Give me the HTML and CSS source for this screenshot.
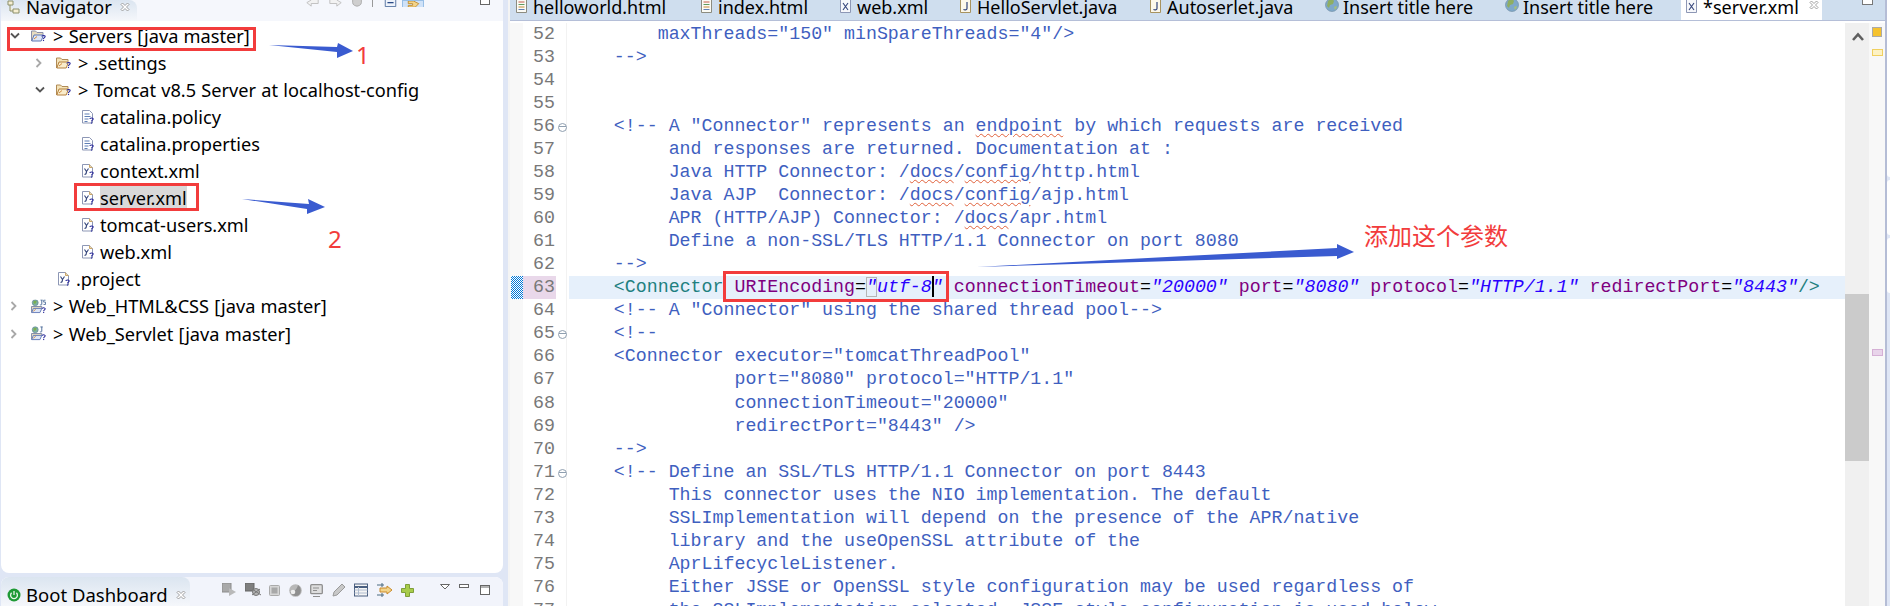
FILE: index.html
```html
<!DOCTYPE html>
<html lang="en">
<head>
<meta charset="utf-8">
<title>server.xml</title>
<link rel="stylesheet" href="styles.css">
</head>
<body>
<svg class="defs" width="0" height="0" aria-hidden="true">
  <defs>
    <symbol id="q" viewBox="0 0 6 8"><path d="M1 2.2C1 .6 5 .4 5 2.2 5 3.6 3 3.6 3 5.2" fill="none" stroke="#2a2a9a" stroke-width="1.3"/><rect x="2.3" y="6.2" width="1.4" height="1.5" fill="#2a2a9a"/></symbol>
    <symbol id="folder" viewBox="0 0 15 14"><path d="M.5 12.5V2.5h4l1.5 1.5h6v2" fill="#f4e3b8" stroke="#b08a55"/><path d="M.8 12.5 3 6.5h9.5L10.2 12.5z" fill="#f9eccb" stroke="#b4803e"/><path d="M3 10.5 6 8" stroke="#d08a3a" fill="none"/><use href="#q" x="10" y="6" width="5" height="7"/></symbol>
    <symbol id="project" viewBox="0 0 15 14"><path d="M.5 12.5V2.5h4l1.5 1.5h6v2" fill="#e8dcc0" stroke="#8a8fa8"/><path d="M.8 12.5 3 6.5h9.5L10.2 12.5z" fill="#dfe6f6" stroke="#5f78b5"/><path d="M3 10.5 6 8" stroke="#d08a3a" fill="none"/><use href="#q" x="10" y="6" width="5" height="7"/></symbol>
    <symbol id="webproject" viewBox="0 0 16 15"><circle cx="4.5" cy="3.5" r="3.2" fill="#7fb0a0" stroke="#5a7f90" stroke-width=".6"/><path d="M2.500 2.500c1-1.400 3-1.400 3.500-.6l-1 2.400-2 .2z" fill="#7bb04f"/><path d="M.5 14V7.500h11v2" fill="#e8dcc0" stroke="#7f89a8"/><path d="M.8 14 2.500 9.500h9L9.500 14z" fill="#dfe6f6" stroke="#5f78b5"/><path d="M2.500 12.500 5 10.500" stroke="#d08a3a" fill="none"/><path d="M10 .5h2.500M11.500 .5v4.500c0 1-1 1-2 .6" fill="none" stroke="#4a6a98" stroke-width="1"/><use href="#q" x="11" y="8" width="5" height="7"/></symbol>
    <symbol id="webproject-js" viewBox="0 0 16 15"><use href="#webproject" width="16" height="15"/><path d="M15.500 .8h-2v2h2v2.500h-2.200" fill="none" stroke="#4a6a98" stroke-width=".9"/></symbol>
    <symbol id="textfile" viewBox="0 0 12 14"><path d="M.5.5h7l3 3v9.500H.5z" fill="#fff" stroke="#8d97b5"/><path d="M2.500 4h5M2.500 6.500h6M2.500 9h4M2.500 11.500h3" stroke="#5f7fb5" fill="none"/><use href="#q" x="7" y="7" width="5" height="7"/></symbol>
    <symbol id="xmlfile" viewBox="0 0 12 14"><path d="M.5.5h7l3 3v9.500H.5z" fill="#fff" stroke="#8d97b5"/><path d="M7.500.5v3h3" fill="#f1d9a8" stroke="#c9a66a"/><path d="M2.500 4.500l2 3 2-3M4.500 7.500c0 2-.6 3-2 3" fill="none" stroke="#33447a" stroke-width="1.100"/><use href="#q" x="7" y="7" width="5" height="7"/></symbol>
    <symbol id="close" viewBox="0 0 10 10"><path d="M1 2.500 2.500 1 5 3.500 7.500 1 9 2.500 6.500 5 9 7.500 7.500 9 5 6.500 2.500 9 1 7.500 3.500 5z" fill="#fff" stroke="#8c8c8c" stroke-width=".8"/></symbol>
    <symbol id="chev-down" viewBox="0 0 10 7"><path d="M1 1.500 5 5.500 9 1.500" fill="none" stroke="#555" stroke-width="1.800"/></symbol>
    <symbol id="chev-right" viewBox="0 0 7 10"><path d="M1.500 1 5.500 5 1.500 9" fill="none" stroke="#a8a8a8" stroke-width="1.800"/></symbol>
    <symbol id="htmlfile" viewBox="0 0 11 14"><path d="M.5.5h10v13H.5z" fill="#fbfbf5" stroke="#8c8c80"/><path d="M2.500 3h6" stroke="#c25a4a"/><path d="M2.500 5.500h6" stroke="#5f9a5f"/><path d="M2.500 8h6" stroke="#c58a3a"/><path d="M2.500 10.500h6" stroke="#5f7fb5"/></symbol>
    <symbol id="xfile" viewBox="0 0 11 14"><path d="M.5.5h10v13H.5z" fill="#f7f8fb" stroke="#8d97b5"/><path d="M3 4l5 7M8 4l-5 7" stroke="#33447a" stroke-width="1.100"/></symbol>
    <symbol id="jfile" viewBox="0 0 11 14"><path d="M.5.5h10v13H.5z" fill="#fdf8ea" stroke="#a8935f"/><path d="M7 3v6.500c0 1.500-2.500 1.800-3.500.8" fill="none" stroke="#33447a" stroke-width="1.200"/></symbol>
    <symbol id="globe" viewBox="0 0 14 14"><circle cx="7" cy="7" r="6.500" fill="#7fa8c9" stroke="#6a8aa0" stroke-width=".6"/><path d="M3 3c2-2 5-2 6 0l-1 3-3 1-1 3-2-2z" fill="#8fae62"/><path d="M9 9c1-1 3-1 3 0l-2 3z" fill="#a8c07a"/></symbol>
  </defs>
</svg>

<div class="workbench">
  <aside class="left">
    <section class="pane nav-pane">
      <header class="viewbar">
        <div class="viewtab nav-tab">
          <svg class="vicon" viewBox="0 0 14 14"><path d="M1 1h5v4H1zM6 9h6v4H6zM3 5v6h3" fill="#f7efd2" stroke="#8b8f6a"/></svg>
          <span class="viewtitle">Navigator</span>
          <svg class="close"><use href="#close"/></svg>
        </div>
        <div class="toolbar nav-tools">
          <svg class="tool t15" viewBox="0 0 15 8"><path d="M14 0v4H6v3L1 3 6 0" fill="#f2f2f2" stroke="#bcbcbc"/></svg>
          <svg class="tool t15" viewBox="0 0 15 8"><path d="M1 0v4h8v3l5-4-5-3" fill="#f2f2f2" stroke="#bcbcbc"/></svg>
          <svg class="tool t12" viewBox="0 0 12 8"><path d="M1 0v3c0 3 4 4 5 4s5-1 5-4V0" fill="#cfcfcf" stroke="#a8a8a8"/></svg>
          <span class="tool-sep"></span>
          <svg class="tool t13" viewBox="0 0 13 8"><path d="M.5 0v7.500h12V0" fill="#eef3fb" stroke="#4a6a9a"/><path d="M3 3h7" stroke="#2a4a86" stroke-width="1.500"/></svg>
          <span class="tool-on"><svg class="tool t13" viewBox="0 0 14 8"><path d="M1 0h6V0l6 3-4 4H1V5h5V3H1z" fill="#f3d48a" stroke="#c08a2a"/></svg></span>
          <span class="tool-gap"></span>
          <span class="mini-max"></span>
        </div>
      </header>
      <div class="tree">
        <div class="node d0"><svg class="twist"><use href="#chev-down"/></svg><svg class="ic15"><use href="#project"/></svg><span>&gt; Servers [java master]</span></div>
        <div class="node d1"><svg class="twist tr"><use href="#chev-right"/></svg><svg class="ic15"><use href="#folder"/></svg><span>&gt; .settings</span></div>
        <div class="node d1"><svg class="twist"><use href="#chev-down"/></svg><svg class="ic15"><use href="#folder"/></svg><span>&gt; Tomcat v8.5 Server at localhost-config</span></div>
        <div class="node d2"><svg class="ic11"><use href="#textfile"/></svg><span>catalina.policy</span></div>
        <div class="node d2"><svg class="ic11"><use href="#textfile"/></svg><span>catalina.properties</span></div>
        <div class="node d2"><svg class="ic11"><use href="#xmlfile"/></svg><span>context.xml</span></div>
        <div class="node d2"><svg class="ic11"><use href="#xmlfile"/></svg><span class="picked">server.xml</span></div>
        <div class="node d2"><svg class="ic11"><use href="#xmlfile"/></svg><span>tomcat-users.xml</span></div>
        <div class="node d2"><svg class="ic11"><use href="#xmlfile"/></svg><span>web.xml</span></div>
        <div class="node d1b"><svg class="ic11"><use href="#xmlfile"/></svg><span>.project</span></div>
        <div class="node d0"><svg class="twist tr"><use href="#chev-right"/></svg><svg class="ic15"><use href="#webproject-js"/></svg><span>&gt; Web_HTML&amp;CSS [java master]</span></div>
        <div class="node d0"><svg class="twist tr"><use href="#chev-right"/></svg><svg class="ic15"><use href="#webproject"/></svg><span>&gt; Web_Servlet [java master]</span></div>
      </div>
    </section>
    <section class="pane boot-pane">
      <header class="viewbar bootbar">
        <div class="viewtab boot-tab">
          <svg class="vicon boot-ic" viewBox="0 0 14 14"><circle cx="7" cy="7" r="6.500" fill="#1f9a35"/><path d="M4.600 4.800a3.400 3.400 0 1 0 4.800 0M7 3v4" fill="none" stroke="#e8f5e8" stroke-width="1.300"/></svg>
          <span class="viewtitle">Boot Dashboard</span>
          <svg class="close"><use href="#close"/></svg>
        </div>
        <div class="toolbar boot-tools">
          <svg class="bt" viewBox="0 0 14 14"><rect x="0" y="0" width="9" height="9" fill="#a9a9a9" stroke="#8c8c8c"/><path d="M7 5l7 4-7 4z" fill="#b9b9b9"/></svg>
          <svg class="bt w16" viewBox="0 0 16 14"><rect x="0" y="0" width="9" height="8" fill="#7f7f7f" stroke="#666"/><circle cx="11" cy="9" r="3.500" fill="#b5b5b5" stroke="#777"/><path d="M7 6l9 6M15 6l-8 6" stroke="#777" fill="none"/></svg>
          <svg class="bt w11" viewBox="0 0 11 11"><rect x=".5" y=".5" width="10" height="10" rx="1" fill="#d6d6d6" stroke="#aaa"/><rect x="2.500" y="2.500" width="6" height="6" fill="#a8a8a8"/></svg>
          <svg class="bt w13" viewBox="0 0 13 13"><circle cx="6.500" cy="6.500" r="6.300" fill="#b8b8b8"/><path d="M1 8c3 0 7-2 8-7 3 2 4 7 1 10-3 2-7 1-9-3z" fill="#8f8f8f"/><circle cx="4" cy="8" r="2.300" fill="#eee"/></svg>
          <svg class="bt w13" viewBox="0 0 13 13"><rect x=".7" y=".7" width="11.600" height="9" rx="1" fill="#dedede" stroke="#8f8f8f" stroke-width="1.300"/><path d="M3 4h6M3 6.500h4M3 12.500h7" stroke="#8f8f8f"/></svg>
          <svg class="bt w14" viewBox="0 0 14 14"><path d="M1 13l1-4 8-8 3 3-8 8z" fill="#c8c8c8" stroke="#9a9a9a"/></svg>
          <svg class="bt w14" viewBox="0 0 14 13"><rect x=".5" y=".5" width="13" height="12" fill="#f5f5f5" stroke="#4a5f80"/><path d="M.5 3.500h13" stroke="#4a5f80" stroke-width="2"/><path d="M.5 6.500h13M.5 9.500h13M4.500 3.500v9" stroke="#b0bccf"/></svg>
          <svg class="bt w16" viewBox="0 0 16 14"><path d="M0 2h7M0 12h7M5 0v4M5 10v4" stroke="#4a6a80" fill="none"/><path d="M3 5h7V3l5 4-5 4V9H3z" fill="#f3d48a" stroke="#c98a2a"/></svg>
          <svg class="bt w13" viewBox="0 0 13 13"><path d="M4.500.5h4v4h4v4h-4v4h-4v-4h-4v-4h4z" fill="#a8cc4a" stroke="#7f9f3a"/></svg>
          <span class="tool-gap2"></span>
          <svg class="bt w10" viewBox="0 0 10 6"><path d="M.5.500h9L5 5z" fill="#fff" stroke="#666"/></svg>
          <svg class="bt w10" viewBox="0 0 10 6"><rect x=".5" y=".5" width="9" height="3" fill="#fff" stroke="#666"/></svg>
          <svg class="bt w10 tall" viewBox="0 0 10 10"><rect x=".5" y=".5" width="9" height="9" fill="#fff" stroke="#666"/><path d="M.5 2h9" stroke="#666"/></svg>
        </div>
      </header>
    </section>
  </aside>

  <main class="editor">
    <nav class="tabs">
      <div class="tab t1"><svg class="tabic"><use href="#htmlfile"/></svg><span>helloworld.html</span></div>
      <div class="tab t2"><svg class="tabic"><use href="#htmlfile"/></svg><span>index.html</span></div>
      <div class="tab t3"><svg class="tabic"><use href="#xfile"/></svg><span>web.xml</span></div>
      <div class="tab t4"><svg class="tabic"><use href="#jfile"/></svg><span>HelloServlet.java</span></div>
      <div class="tab t5"><svg class="tabic"><use href="#jfile"/></svg><span>Autoserlet.java</span></div>
      <div class="tab t6"><svg class="tabic g"><use href="#globe"/></svg><span>Insert title here</span></div>
      <div class="tab t7"><svg class="tabic g"><use href="#globe"/></svg><span>Insert title here</span></div>
      <div class="tab active"><svg class="tabic"><use href="#xfile"/></svg><span>*server.xml</span><svg class="close"><use href="#close"/></svg></div>
      <span class="tabs-max"></span>
    </nav>
    <div class="edit-body">
      <div class="ruler"></div>
      <div class="lines">
        <div class="row"><span class="num">52</span><span class="fold"></span><code class="code"><span class="c">        maxThreads="150" minSpareThreads="4"/&gt;</span></code></div>
        <div class="row"><span class="num">53</span><span class="fold"></span><code class="code"><span class="c">    --&gt;</span></code></div>
        <div class="row"><span class="num">54</span><span class="fold"></span><code class="code"></code></div>
        <div class="row"><span class="num">55</span><span class="fold"></span><code class="code"></code></div>
        <div class="row"><span class="num">56</span><span class="fold on"></span><code class="code"><span class="c">    &lt;!-- A "Connector" represents an <span class="sp">endpoint</span> by which requests are received</span></code></div>
        <div class="row"><span class="num">57</span><span class="fold"></span><code class="code"><span class="c">         and responses are returned. Documentation at :</span></code></div>
        <div class="row"><span class="num">58</span><span class="fold"></span><code class="code"><span class="c">         Java HTTP Connector: /<span class="sp">docs</span>/<span class="sp">config</span>/http.html</span></code></div>
        <div class="row"><span class="num">59</span><span class="fold"></span><code class="code"><span class="c">         Java AJP  Connector: /<span class="sp">docs</span>/<span class="sp">config</span>/ajp.html</span></code></div>
        <div class="row"><span class="num">60</span><span class="fold"></span><code class="code"><span class="c">         APR (HTTP/AJP) Connector: /<span class="sp">docs</span>/apr.html</span></code></div>
        <div class="row"><span class="num">61</span><span class="fold"></span><code class="code"><span class="c">         Define a non-SSL/TLS HTTP/1.1 Connector on port 8080</span></code></div>
        <div class="row"><span class="num">62</span><span class="fold"></span><code class="code"><span class="c">    --&gt;</span></code></div>
        <div class="row hl"><span class="num">63</span><span class="fold"></span><code class="code">    <span class="t">&lt;Connector</span> <span class="a">URIEncoding</span>=<span class="s"><span class="match">"</span>utf-8<span class="caret"></span>"</span> <span class="a">connectionTimeout</span>=<span class="s">"20000"</span> <span class="a">port</span>=<span class="s">"8080"</span> <span class="a">protocol</span>=<span class="s">"HTTP/1.1"</span> <span class="a">redirectPort</span>=<span class="s">"8443"</span><span class="t">/&gt;</span></code></div>
        <div class="row"><span class="num">64</span><span class="fold"></span><code class="code"><span class="c">    &lt;!-- A "Connector" using the shared thread pool--&gt;</span></code></div>
        <div class="row"><span class="num">65</span><span class="fold on"></span><code class="code"><span class="c">    &lt;!--</span></code></div>
        <div class="row"><span class="num">66</span><span class="fold"></span><code class="code"><span class="c">    &lt;Connector executor="tomcatThreadPool"</span></code></div>
        <div class="row"><span class="num">67</span><span class="fold"></span><code class="code"><span class="c">               port="8080" protocol="HTTP/1.1"</span></code></div>
        <div class="row"><span class="num">68</span><span class="fold"></span><code class="code"><span class="c">               connectionTimeout="20000"</span></code></div>
        <div class="row"><span class="num">69</span><span class="fold"></span><code class="code"><span class="c">               redirectPort="8443" /&gt;</span></code></div>
        <div class="row"><span class="num">70</span><span class="fold"></span><code class="code"><span class="c">    --&gt;</span></code></div>
        <div class="row"><span class="num">71</span><span class="fold on"></span><code class="code"><span class="c">    &lt;!-- Define an SSL/TLS HTTP/1.1 Connector on port 8443</span></code></div>
        <div class="row"><span class="num">72</span><span class="fold"></span><code class="code"><span class="c">         This connector uses the NIO implementation. The default</span></code></div>
        <div class="row"><span class="num">73</span><span class="fold"></span><code class="code"><span class="c">         SSLImplementation will depend on the presence of the APR/native</span></code></div>
        <div class="row"><span class="num">74</span><span class="fold"></span><code class="code"><span class="c">         library and the useOpenSSL attribute of the</span></code></div>
        <div class="row"><span class="num">75</span><span class="fold"></span><code class="code"><span class="c">         AprLifecycleListener.</span></code></div>
        <div class="row"><span class="num">76</span><span class="fold"></span><code class="code"><span class="c">         Either JSSE or OpenSSL style configuration may be used regardless of</span></code></div>
        <div class="row"><span class="num">77</span><span class="fold"></span><code class="code"><span class="c">         the SSLImplementation selected. JSSE style configuration is used below.</span></code></div>
      </div>
      <div class="vscroll">
        <svg class="up" viewBox="0 0 12 9"><path d="M1 8l5-5.500 5 5.500" fill="none" stroke="#5f5f5f" stroke-width="2.600"/></svg>
        <div class="thumb"></div>
      </div>
      <div class="overview"></div>
    </div>
  </main>
  <div class="edge">
    <div class="trim trim-a"></div>
    <div class="trim trim-b"></div>
    <div class="trim trim-b"></div>
  </div>
</div>

<div class="redbox rb1"></div>
<div class="redbox rb2"></div>
<div class="redbox rb3"></div>
<svg class="arrows" viewBox="0 0 1890 606" aria-hidden="true">
  <path d="M269 45 337 47 338 43 353 51 337 58 337 52z" fill="#3a5bd0"/>
  <path d="M242 199 309 204 308 199 325 207 307 214 307 209z" fill="#3a5bd0"/>
  <path d="M977 267 1337 248 1337 244 1354 252 1337 259 1337 256z" fill="#3a5bd0"/>
</svg>
<span class="note n1">1</span>
<span class="note n2">2</span>
<span class="note n3">添加这个参数</span>
</body>
</html>
```
FILE: styles.css
```css
* { box-sizing: border-box; }
html, body { margin: 0; height: 606px; overflow: hidden; }
body { background: #fff; font-family: "Noto Sans", "Open Sans", sans-serif; color: #000; }
.defs { position: absolute; }
.workbench { display: flex; width: 1890px; height: 606px; background: #dfe6f5; }

.left { width: 510px; flex: none; display: flex; flex-direction: column; padding: 0 7px 0 1px; background: linear-gradient(90deg, #dfe6f5 508px, #f4f4f4 508px); }
.pane { background: #fff; }
.nav-pane { height: 573px; border-radius: 0 0 8px 8px; overflow: hidden; }
.boot-pane { height: 29px; margin-top: 4px; border-radius: 8px 8px 0 0; overflow: hidden; }
.viewbar { display: flex; height: 21px; background: #f5f7fc; overflow: hidden; }
.bootbar { height: 29px; background: #f2f4fb; }
.viewtab { display: flex; align-items: center; height: 100%; flex: none; background: linear-gradient(#dbe5f0, #f5f7fb); border-radius: 0 8px 0 0; padding-left: 6px; }
.nav-tab { width: 136px; padding-bottom: 7px; }
.boot-tab { width: 189px; padding-bottom: 0; padding-top: 7px; }
.vicon { width: 14px; height: 14px; flex: none; }
.viewtitle { margin-left: 5px; font-size: 18.5px; line-height: 18px; white-space: nowrap; }
.viewtab .close { margin-left: 8px; }
.close { width: 10px; height: 10px; flex: none; }

.toolbar { display: flex; align-items: flex-start; flex: 1; }
.nav-tools { padding-left: 168px; height: 7px; overflow: hidden; }
.tool { display: block; height: 7px; flex: none; }
.t15 { width: 15px; margin-right: 8px; }
.t12 { width: 12px; margin-right: 9px; }
.t13 { width: 13px; }
.tool-sep { width: 1px; height: 9px; background: #999; margin-right: 11px; }
.tool-on { width: 22px; height: 11px; background: #cfe2f8; border: 1px solid #98bfe6; margin-left: 5px; padding-left: 4px; }
.tool-gap { width: 56px; flex: none; }
.mini-max { width: 10px; height: 5px; background: #fff; border: 1px solid #666; border-top: 0; }

.tree { height: 552px; padding-top: 1px; }
.node { display: flex; align-items: center; height: 27.1px; font-size: 18.2px; word-spacing: .5px; white-space: nowrap; }
.node > span { margin-left: 7px; }
.d0 { padding-left: 9px; }
.d1 { padding-left: 34px; }
.d2 { padding-left: 81px; }
.d1b { padding-left: 57px; }
.twist { width: 10px; height: 7px; flex: none; margin-right: 11px; }
.twist.tr { width: 7px; height: 10px; margin-right: 14px; }
.ic15 { width: 15px; height: 15px; flex: none; }
.ic11 { width: 12px; height: 14px; flex: none; }
.d2 > span, .d1b > span { margin-left: 6px; }
.picked { background: #d9d9d9; }

.boot-tools { align-items: center; padding-left: 32px; gap: 8.5px; padding-bottom: 3px; }
.boot-ic { width: 14px; height: 14px; }
.bt { width: 14px; height: 14px; flex: none; }
.w16 { width: 16px; }
.w11 { width: 11px; height: 11px; }
.w13 { width: 13px; height: 13px; }
.w14 { width: 14px; }
.w10 { width: 10px; height: 6px; margin-bottom: 6px; }
.w10.tall { height: 10px; margin-bottom: 0; margin-left: 3px; }
.tool-gap2 { width: 9px; }

.editor { width: 1375px; flex: none; display: flex; flex-direction: column; background: #fff; }
.tabs { display: flex; height: 21px; background: #cfdeee; border-bottom: 1px solid #b5bfd8; overflow: hidden; padding-left: 6px; flex: none; }
.tab { display: flex; align-items: flex-start; height: 20px; flex: none; font-size: 18px; line-height: 14px; white-space: nowrap; }
.tab > span { margin-left: 6px; }
.tabic { width: 11px; height: 14px; flex: none; margin-top: -1px; }
.tabic.g { width: 14px; height: 14px; margin-top: -2px; }
.tabic.g + span { margin-left: 4px; }
.t1 { width: 185px; }
.t2 { width: 139px; }
.t3 { width: 120px; }
.t4 { width: 190px; }
.t5 { width: 175px; }
.t6 { width: 180px; }
.t7 { width: 176px; }
.tab.active { width: 141px; background: #fff; height: 21px; padding-left: 5px; }
.tab.active .close { margin: 0 0 0 10px; }
.tabs-max { width: 11px; height: 5px; background: #fff; border: 1px solid #777; border-top: 0; margin-left: 40px; }

.edit-body { display: flex; flex: 1; min-height: 0; overflow: hidden; padding-top: 2px; background: #fff; }
.ruler { width: 13px; flex: none; background: #f8f8f8; position: relative; }
.ruler::after { content: ""; position: absolute; left: 1px; top: 253px; width: 12px; height: 23px; background: repeating-conic-gradient(#0078d7 0 25%, #fff 0 50%) 0 0 / 2px 2px; }
.lines { flex: 1; min-width: 0; overflow: hidden; }
.row { display: flex; height: 23.04px; line-height: 23px; }
.num { width: 33px; flex: none; padding-right: 1px; text-align: right; font-family: "Liberation Mono", monospace; font-size: 18.28px; color: #787878; }
.fold { flex: none; position: relative; border-right: 1px solid #f2f2f2; margin-right: 2px; width: 11px; }
.fold.on::after { content: ""; position: absolute; left: 2px; top: 8px; width: 7px; height: 7px; border: 1px solid #8f9fb0; border-radius: 50%; background: linear-gradient(transparent 2px, #8f9fb0 2px, #8f9fb0 3px, transparent 3px); }
.code { display: block; flex: 1; min-width: 0; padding-left: 1px; font-family: "Liberation Mono", monospace; font-size: 18.28px; white-space: pre; color: #000; }
.hl .code { background: #e6f0fb; }
.hl .num { background: #e9d8ea; }
.c { color: #3f5fbf; }
.t { color: #1f8080; }
.a { color: #7f007f; }
.s { color: #2a00ff; font-style: italic; }
.sp { text-decoration: underline wavy #e0603a 1px; text-underline-offset: 2px; }
.match { outline: 1px solid #b5b5b5; outline-offset: -1px; }
.caret { display: inline-block; width: 0; height: 21px; border-left: 2px solid #000; vertical-align: -5px; margin-right: -2px; }

.vscroll { width: 24px; flex: none; background: #f0f0f0; position: relative; }
.up { position: absolute; left: 7px; top: 9px; width: 12px; height: 9px; }
.thumb { height: 167px; margin-top: 271px; background: #cbcbcb; }
.overview { width: 16px; flex: none; background: #f8f8f8; position: relative; }
.overview::before { content: ""; position: absolute; left: 3px; top: 4px; width: 8px; height: 8px; background: #f5c22e; border: 1px solid #aaa; }
.overview::after { content: ""; position: absolute; left: 3px; top: 26px; width: 9px; height: 5px; background: #fdf2c4; border: 1px solid #f0d060; box-shadow: 0 300px 0 -1px #e8d4ea, 0 300px 0 0 #d5b0d5; }

.edge { width: 5px; flex: none; display: flex; flex-direction: column; gap: 3px; background: #dfe6f5; border-left: 2px solid #b5bdd6; }
.trim { background: #fff; border-radius: 0 0 0 3px; }
.trim-a { height: 177px; }
.trim-b { height: 55px; border-radius: 3px 0 0 3px; }

/* annotations drawn over the screenshot */
.redbox { position: absolute; border: 3px solid #f23c3c; pointer-events: none; }
.rb1 { left: 7px; top: 27px; width: 249px; height: 24px; }
.rb2 { left: 74px; top: 183px; width: 125px; height: 28px; }
.rb3 { left: 723px; top: 271px; width: 226px; height: 31px; }
.arrows { position: absolute; left: 0; top: 0; width: 1890px; height: 606px; pointer-events: none; }
.note { position: absolute; color: #f23c3c; font-family: "Noto Sans", sans-serif; font-size: 24px; line-height: 24px; }
.n1 { left: 356px; top: 43px; }
.n2 { left: 328px; top: 227px; }
.n3 { left: 1364px; top: 223px; font-family: "Noto Sans CJK SC", sans-serif; }
```
